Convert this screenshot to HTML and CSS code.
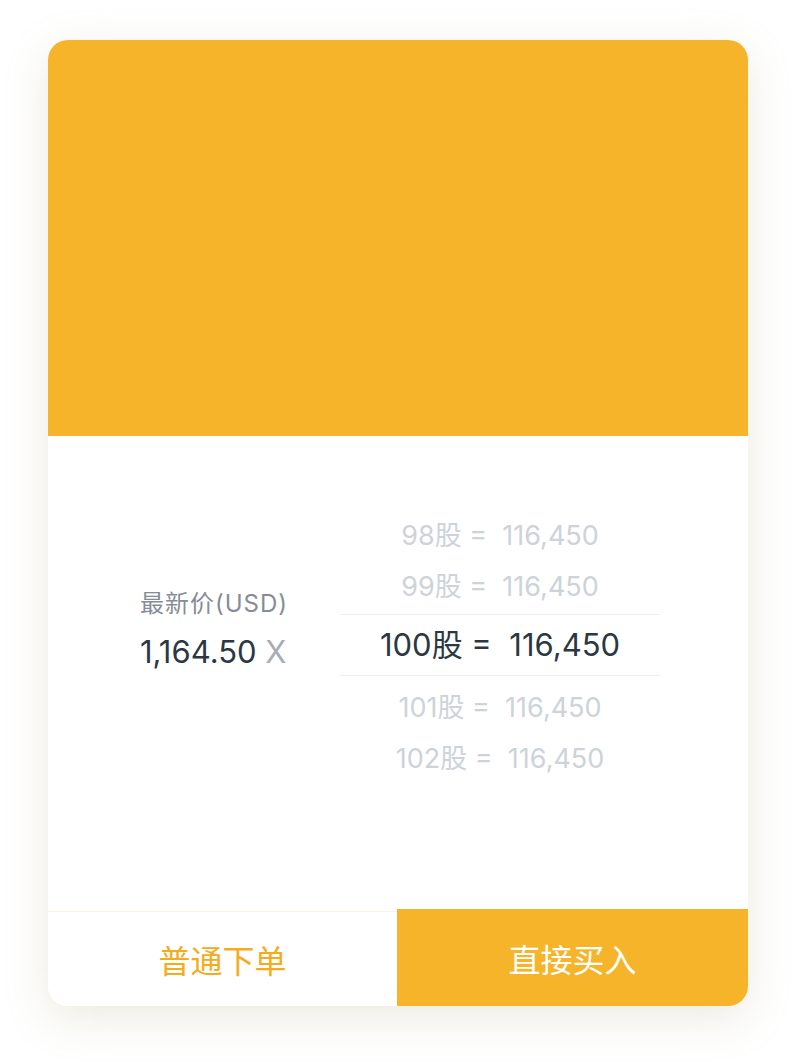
FILE: index.html
```html
<!DOCTYPE html>
<html lang="zh-CN">
<head>
<meta charset="utf-8">
<title>下单</title>
<link rel="stylesheet" href="styles.css">
</head>
<body>
<div class="page">
  <div class="card">
    <div class="banner"></div>
    <div class="content">
      <div class="price">
        <div class="price-label">最新价(USD)</div>
        <div class="price-value">1,164.50 <span class="price-x">X</span></div>
      </div>
      <div class="picker">
        <div class="row faded">98股 =&nbsp; 116,450</div>
        <div class="row faded">99股 =&nbsp; 116,450</div>
        <div class="row selected">100股 =&nbsp; 116,450</div>
        <div class="row faded">101股 =&nbsp; 116,450</div>
        <div class="row faded">102股 =&nbsp; 116,450</div>
      </div>
    </div>
    <div class="actions">
      <div class="btn btn-normal">普通下单</div>
      <div class="btn btn-buy">直接买入</div>
    </div>
  </div>
</div>
</body>
</html>
```

FILE: styles.css
```css
html, body {
  margin: 0;
  padding: 0;
  background: #ffffff;
}
body {
  font-family: Inter, "Noto Sans CJK SC", sans-serif;
}
.page {
  padding: 40px 48px 58px;
}
.card {
  width: 700px;
  height: 966px;
  border-radius: 20px;
  overflow: hidden;
  background: #ffffff;
  box-shadow: 0 12px 44px rgba(170, 160, 110, 0.22);
  display: flex;
  flex-direction: column;
}
.banner {
  height: 396px;
  background: #F6B42A;
  flex: none;
}
.content {
  height: 473px;
  box-sizing: border-box;
  padding: 74px 0 0 92px;
  display: flex;
  align-items: flex-start;
  gap: 46px;
}
.price {
  width: 154px;
  margin-top: 78px;
}
.price-label {
  font-size: 24px;
  line-height: 32px;
  letter-spacing: 1px;
  color: #868c97;
  white-space: nowrap;
}
.price-value {
  margin-top: 14px;
  font-size: 31px;
  line-height: 36px;
  color: #2b3843;
  white-space: nowrap;
}
.price-x {
  color: #a7adb3;
}
.picker {
  width: 320px;
  display: flex;
  flex-direction: column;
}
.row {
  text-align: center;
  white-space: nowrap;
}
.faded {
  height: 51px;
  line-height: 51px;
  font-size: 27px;
  color: #cdd3d9;
}
.selected {
  margin: 2px 0 6px;
  height: 60px;
  line-height: 60px;
  font-size: 31px;
  color: #2b3843;
  border-top: 1px solid #efefef;
  border-bottom: 1px solid #efefef;
}
.actions {
  flex: 1;
  display: flex;
}
.btn {
  flex: 1;
  display: flex;
  align-items: center;
  justify-content: center;
  font-size: 32px;
}
.btn-normal {
  margin-top: 2px;
  border-top: 1px solid #fbf3e2;
  color: #F5AC1C;
  background: #ffffff;
}
.btn-buy {
  width: 351px;
  flex: none;
  color: #ffffff;
  background: #F6B42A;
}
```
